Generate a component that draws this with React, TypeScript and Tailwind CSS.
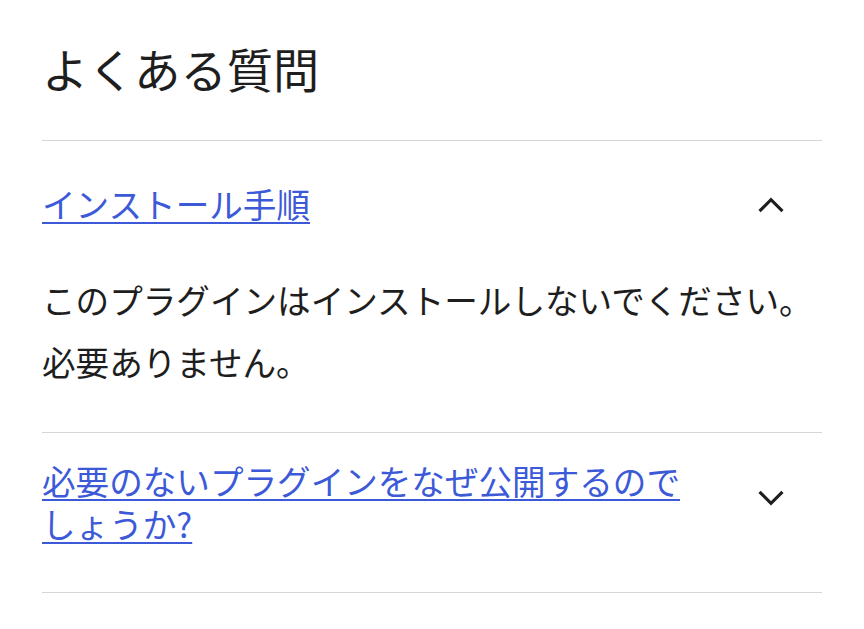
import React from "react";

function Chevron({ up }: { up?: boolean }) {
  return (
    <svg width="50" height="50" viewBox="0 0 24 24" fill="none" className="block">
      <path
        d={up ? "M6.5 14.5 L12 9 L17.5 14.5" : "M6.5 9.5 L12 15 L17.5 9.5"}
        stroke="#1e1e1e"
        strokeWidth="1.5"
        strokeLinecap="butt"
        strokeLinejoin="miter"
      />
    </svg>
  );
}

export default function App() {
  const font = { fontFamily: "'Noto Sans CJK JP', 'Noto Sans', sans-serif" };
  return (
    <div className="min-h-[629px] bg-white px-[42px] pt-[38px] text-[#1e1e1e]" style={font}>
      <h2 className="text-[46.2px] leading-[60px] font-normal">よくある質問</h2>
      <div className="mt-[42px] border-t border-[#d6d6d6]">
        <div className="flex items-start justify-between gap-[44px] pt-[41px] pb-[38px] pr-[26px]">
          <a href="#" className="text-[33.6px] leading-[44px] text-[#3c5ad8] underline decoration-[2px] underline-offset-[4px]">
            インストール手順
          </a>
          <div className="mt-[-1px] shrink-0">
            <Chevron up />
          </div>
        </div>
        <div className="text-[33.6px] leading-[62px] pb-[39px]">
          <p>このプラグインはインストールしないでください。</p>
          <p>必要ありません。</p>
        </div>
      </div>
      <div className="border-t border-[#d6d6d6]">
        <div className="flex items-start justify-between gap-[44px] pt-[26px] pb-[47px] pr-[26px]">
          <a href="#" className="text-[33.6px] leading-[43px] text-[#3c5ad8] underline decoration-[2px] underline-offset-[4px]">
            必要のないプラグインをなぜ公開するのでしょうか?
          </a>
          <div className="mt-[13px] shrink-0">
            <Chevron />
          </div>
        </div>
      </div>
      <div className="border-t border-[#d6d6d6]" />
    </div>
  );
}
